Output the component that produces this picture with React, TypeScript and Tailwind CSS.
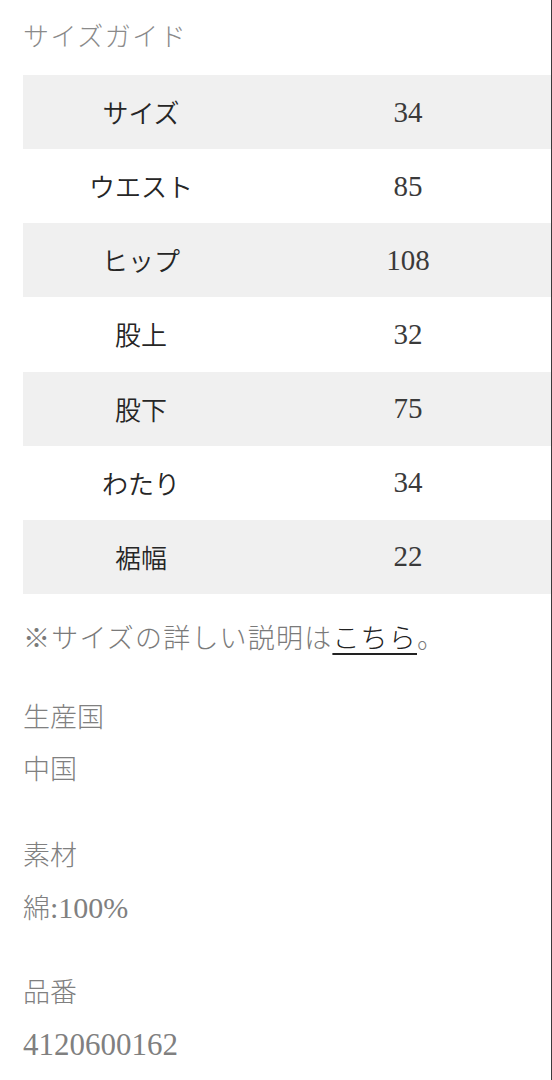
import React from "react";

const rows: [string, string][] = [
  ["サイズ", "34"],
  ["ウエスト", "85"],
  ["ヒップ", "108"],
  ["股上", "32"],
  ["股下", "75"],
  ["わたり", "34"],
  ["裾幅", "22"],
];

const serif = "font-['Liberation_Serif','Noto_Sans_CJK_JP',serif]";

export default function App() {
  return (
    <div className="w-[552px] h-[1080px] bg-white border-r border-[#3a3a3a] overflow-hidden">
      <div className="pl-[23px]">
        <div
          className={`h-[75px] flex items-center text-[26px] tracking-[1.5px] text-[#8a8a8a] font-light ${serif}`}
        >
          サイズガイド
        </div>
        <div className="flex flex-col">
          {rows.map(([k, v], i) => (
            <div
              key={k}
              className={`flex h-[74.15px] items-center ${
                i % 2 === 0 ? "bg-[#f0f0f0]" : "bg-white"
              }`}
            >
              <div className="w-[236px] text-center text-[26px] text-[#262626] font-[350] font-['Noto_Sans_CJK_JP',sans-serif] leading-none">
                {k}
              </div>
              <div className="flex-1 text-center pl-[6px] text-[29px] text-[#3a3a3a] font-['Liberation_Serif',serif] leading-none">
                {v}
              </div>
            </div>
          ))}
        </div>
        <div className="mt-[17px] h-[52px] leading-[52px] text-[27px] tracking-[1.2px] text-[#7a7a7a] font-light font-['Noto_Sans_CJK_JP',sans-serif]">
          ※サイズの詳しい説明は
          <span className="text-[#222] underline underline-offset-[5px] decoration-[1.5px]">
            こちら
          </span>
          。
        </div>
        <div className={`mt-[29px] text-[#808080] ${serif}`}>
          <div className="h-[52px] leading-[52px] text-[27px] font-light">生産国</div>
          <div className="h-[52px] leading-[52px] text-[27px] font-light">中国</div>
          <div className="mt-[34px] h-[52px] leading-[52px] text-[27px] font-light">素材</div>
          <div className="h-[52px] leading-[52px] text-[27px] font-light">
            綿<span className="text-[30px]">:100%</span>
          </div>
          <div className="mt-[33px] h-[52px] leading-[52px] text-[27px] font-light">品番</div>
          <div className="h-[52px] leading-[52px] text-[31px]">4120600162</div>
        </div>
      </div>
    </div>
  );
}
